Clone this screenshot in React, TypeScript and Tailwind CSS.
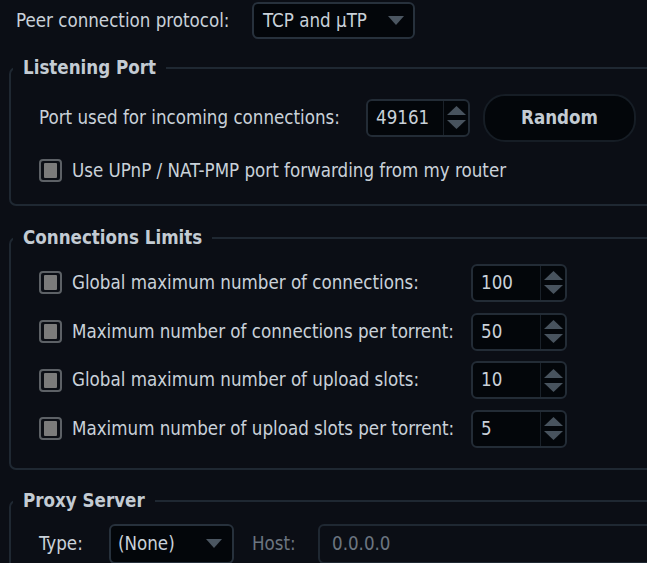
import React from 'react';

const font = { fontFamily: '"DejaVu Sans Condensed", "DejaVu Sans", sans-serif' };

const Caret = () => (
  <svg width="16" height="9" viewBox="0 0 16 9" className="shrink-0">
    <path d="M0 0 H16 L8 9 Z" fill="#4b5661" />
  </svg>
);

const Spin = ({ value, w }: { value: string; w: string }) => (
  <div className={`flex h-[38px] ${w} items-stretch rounded-[6px] border-2 border-[#232c36] bg-[#03060a]`}>
    <div className="flex flex-1 items-center pl-[8px] text-[#c9d1d9]">{value}</div>
    <div className="flex w-[25px] flex-col items-center justify-center gap-[5px] border-l border-[#1a2129]">
      <svg width="19" height="9" viewBox="0 0 19 9"><path d="M9.5 0 L19 9 H0 Z" fill="#48535e" /></svg>
      <svg width="19" height="9" viewBox="0 0 19 9"><path d="M0 0 H19 L9.5 9 Z" fill="#48535e" /></svg>
    </div>
  </div>
);

const Check = ({ label }: { label: string }) => (
  <div className="flex items-center gap-[10px]">
    <div className="flex h-[23px] w-[23px] shrink-0 items-center justify-center rounded-[4px] border-2 border-[#5d6166]">
      <div className="h-[15px] w-[13px] rounded-[1px] bg-[#7b7b7b]" />
    </div>
    <span>{label}</span>
  </div>
);

const Group = ({ title, className, children }: { title: string; className: string; children: React.ReactNode }) => (
  <fieldset className={`w-[700px] rounded-[7px] border-2 border-[#1f2832] pl-[2px] ${className}`}>
    <legend className="px-[10px] font-bold text-[#c3cbd3]">{title}</legend>
    {children}
  </fieldset>
);

const limits = [
  { label: 'Global maximum number of connections:', value: '100' },
  { label: 'Maximum number of connections per torrent:', value: '50' },
  { label: 'Global maximum number of upload slots:', value: '10' },
  { label: 'Maximum number of upload slots per torrent:', value: '5' },
];

export default function App() {
  return (
    <div className="h-[563px] w-[647px] overflow-hidden bg-[#0b0e15] text-[18.6px] text-[#c9d1d9]" style={font}>
      <div className="flex items-center pl-[16px] pt-[2px]">
        <span className="w-[236px]">Peer connection protocol:</span>
        <div className="flex h-[37px] w-[163px] items-center justify-between rounded-[6px] border-2 border-[#27313c] bg-[#03060a] pl-[9px] pr-[9px]">
          <span>TCP and μTP</span>
          <Caret />
        </div>
      </div>

      <Group title="Listening Port" className="ml-[9px] mt-[15px] h-[152px]">
        <div className="flex items-center pl-[26px] pt-[12px]">
          <span className="w-[327px]">Port used for incoming connections:</span>
          <Spin value="49161" w="w-[104px]" />
          <button className="ml-[13px] h-[48px] w-[153px] rounded-[22px] border-2 border-[#161d25] bg-[#03060a] font-bold text-[#c3cbd3]">
            Random
          </button>
        </div>
        <div className="mt-[15px] pl-[26px]">
          <Check label="Use UPnP / NAT-PMP port forwarding from my router" />
        </div>
      </Group>

      <Group title="Connections Limits" className="ml-[9px] mt-[18px] h-[246px]">
        <div className="flex flex-col gap-[10.7px] pl-[26px] pt-[12px]">
          {limits.map((l) => (
            <div key={l.label} className="flex items-center">
              <div className="w-[432px]">
                <Check label={l.label} />
              </div>
              <Spin value={l.value} w="w-[96px]" />
            </div>
          ))}
        </div>
      </Group>

      <Group title="Proxy Server" className="ml-[9px] mt-[17px] h-[120px]">
        <div className="flex items-center pl-[26px] pt-[9px]">
          <span className="w-[70px]">Type:</span>
          <div className="flex h-[40px] w-[125px] items-center justify-between rounded-[6px] border-2 border-[#27313c] bg-[#03060a] pl-[7px] pr-[10px]">
            <span>(None)</span>
            <Caret />
          </div>
          <span className="ml-[18px] w-[66px] text-[#6b7580]">Host:</span>
          <div className="flex h-[40px] w-[340px] items-center rounded-[6px] border-2 border-[#1f2832] pl-[12px] text-[#6b7580]">
            0.0.0.0
          </div>
        </div>
      </Group>
    </div>
  );
}
